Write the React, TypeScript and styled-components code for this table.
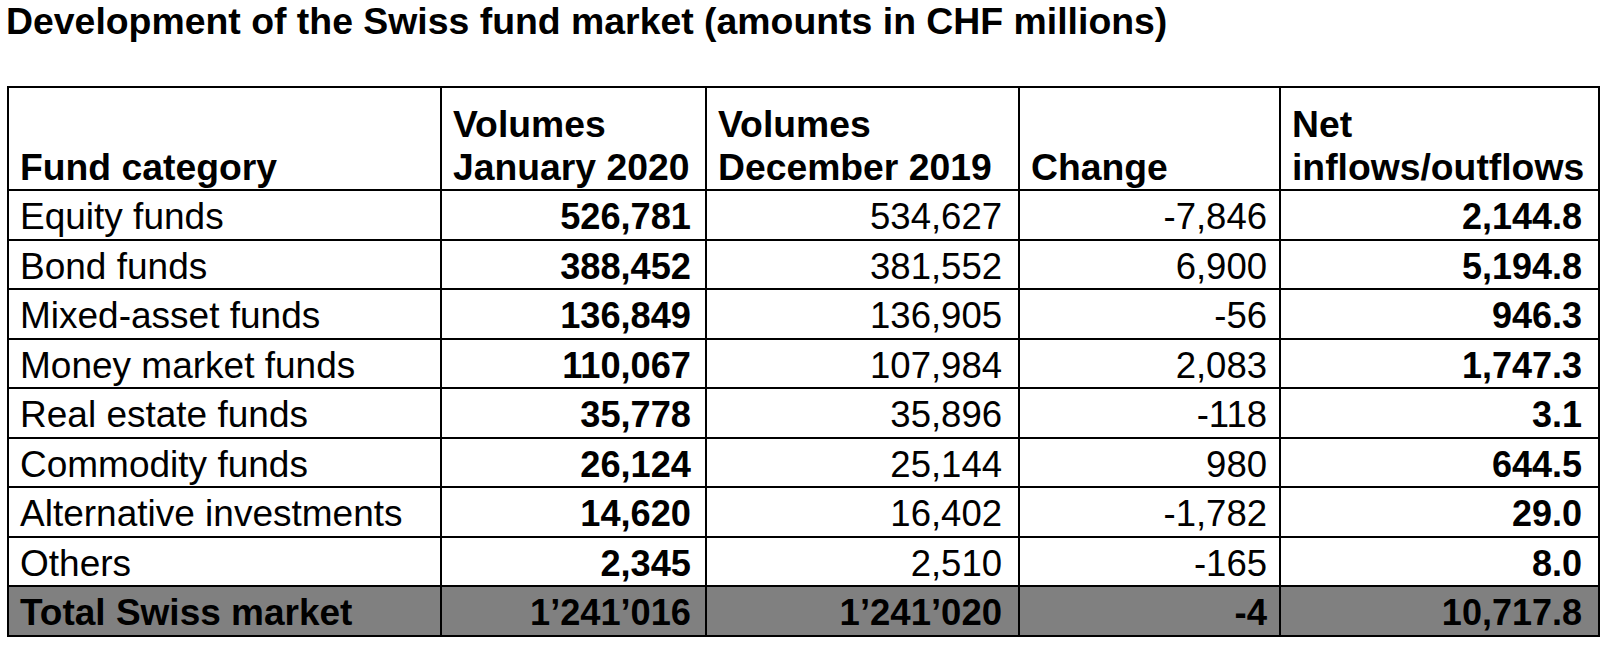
import React from "react";
import styled, { createGlobalStyle } from "styled-components";

const GlobalStyle = createGlobalStyle`
  html, body {
    margin: 0;
    padding: 0;
    background: #ffffff;
  }
  body {
    font-family: "Liberation Sans", Arial, Helvetica, sans-serif;
    color: #000000;
  }
`;

const Page = styled.div`
  padding: 0 0 0 7px;
`;

const Title = styled.h1`
  margin: 0 0 44px -1px;
  font-size: 37.4px;
  line-height: 42px;
  font-weight: 700;
  white-space: nowrap;
`;

const Grid = styled.div`
  display: grid;
  grid-template-columns: 431px 263px 311px 259px 317px;
  grid-template-rows: 101px repeat(9, 47.5px);
  gap: 2px;
  padding: 2px;
  background: #000000;
  width: fit-content;
`;

const HeadCell = styled.div`
  background: #ffffff;
  display: flex;
  flex-direction: column;
  justify-content: flex-end;
  padding: 0 11px;
  font-size: 37.3px;
  line-height: 43px;
  font-weight: 700;
  white-space: nowrap;
`;

const Cell = styled.div<{
  $align: "left" | "right";
  $bold: boolean;
  $total: boolean;
  $pr: number;
  $size: number;
}>`
  background: ${(p) => (p.$total ? "#808080" : "#ffffff")};
  padding: 4px ${(p) => p.$pr}px 0 11px;
  font-size: ${(p) => p.$size}px;
  line-height: 43px;
  font-weight: ${(p) => (p.$bold ? 700 : 400)};
  text-align: ${(p) => p.$align};
  white-space: nowrap;
`;

type Row = [string, string, string, string, string];

const rows: Row[] = [
  ["Equity funds", "526,781", "534,627", "-7,846", "2,144.8"],
  ["Bond funds", "388,452", "381,552", "6,900", "5,194.8"],
  ["Mixed-asset funds", "136,849", "136,905", "-56", "946.3"],
  ["Money market funds", "110,067", "107,984", "2,083", "1,747.3"],
  ["Real estate funds", "35,778", "35,896", "-118", "3.1"],
  ["Commodity funds", "26,124", "25,144", "980", "644.5"],
  ["Alternative investments", "14,620", "16,402", "-1,782", "29.0"],
  ["Others", "2,345", "2,510", "-165", "8.0"],
];

const total: Row = ["Total Swiss market", "1\u2019241\u2019016", "1\u2019241\u2019020", "-4", "10,717.8"];

const boldCols = [false, true, false, false, true];
const rightPad = [11, 14, 16, 12, 16];
const sizes = [37, 36.2, 36.5, 36.5, 36];

export default function App() {
  return (
    <Page>
      <GlobalStyle />
      <Title>Development of the Swiss fund market (amounts in CHF millions)</Title>
      <Grid>
        <HeadCell>Fund category</HeadCell>
        <HeadCell>
          <span>Volumes</span>
          <span>January 2020</span>
        </HeadCell>
        <HeadCell>
          <span>Volumes</span>
          <span>December 2019</span>
        </HeadCell>
        <HeadCell>Change</HeadCell>
        <HeadCell>
          <span>Net</span>
          <span>inflows/outflows</span>
        </HeadCell>
        {rows.map((r) =>
          r.map((v, i) => (
            <Cell
              key={r[0] + i}
              $align={i === 0 ? "left" : "right"}
              $bold={boldCols[i]}
              $total={false}
              $pr={rightPad[i]}
              $size={sizes[i]}
            >
              {v}
            </Cell>
          ))
        )}
        {total.map((v, i) => (
          <Cell
            key={"total" + i}
            $align={i === 0 ? "left" : "right"}
            $bold
            $total
            $pr={rightPad[i]}
            $size={sizes[i]}
          >
            {v}
          </Cell>
        ))}
      </Grid>
    </Page>
  );
}
